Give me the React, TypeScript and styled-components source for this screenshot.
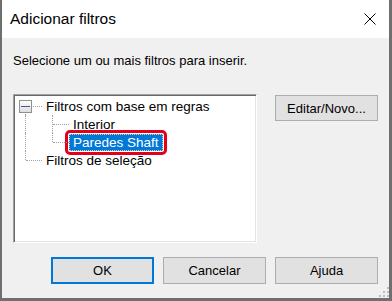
import styled, { createGlobalStyle, css } from "styled-components";

const GlobalStyle = createGlobalStyle`
  html, body {
    margin: 0;
    padding: 0;
    background: #f0f0f0;
  }
  body {
    font-family: "Liberation Sans", Arial, sans-serif;
    color: #000;
  }
`;

const Window = styled.div`
  position: relative;
  width: 392px;
  height: 301px;
  box-sizing: border-box;
  border: 0 solid #6f6f6f;
  border-width: 0 3px 3px 2px;
  display: flex;
  flex-direction: column;
  background: #f0f0f0;
  overflow: hidden;
`;

const TitleBar = styled.div`
  flex: none;
  height: 38px;
  display: flex;
  align-items: center;
  padding-left: 8px;
  background: #fff;
`;

const Title = styled.span`
  flex: 1;
  font-size: 15.5px;
`;

const CloseButton = styled.div`
  width: 38px;
  height: 38px;
  display: flex;
  align-items: center;
  justify-content: center;
`;

const Body = styled.div`
  flex: 1;
  display: flex;
  flex-direction: column;
  padding: 15px 11px 14px;
`;

const Prompt = styled.p`
  margin: 0;
  font-size: 13px;
  line-height: 16px;
`;

const Middle = styled.div`
  display: flex;
  align-items: flex-start;
  gap: 18px;
  margin-top: 25px;
`;

const TreeBox = styled.div`
  width: 244px;
  height: 149px;
  box-sizing: border-box;
  background: #fff;
  border: 1px solid;
  border-color: #a0a0a0 #fff #fff #a0a0a0;
  box-shadow: inset 1px 1px 0 #696969, inset -1px -1px 0 #e3e3e3;
  padding: 2px 0 0 1px;
`;

const Row = styled.div`
  display: flex;
  align-items: center;
  height: 18px;
`;

type Line = "none" | "full" | "top" | "bottom";

const Gutter = styled.span<{ $v: Line; $h?: boolean }>`
  position: relative;
  flex: none;
  width: 27px;
  height: 18px;
  display: flex;
  align-items: flex-start;

  &::before {
    content: "";
    display: ${(p) => (p.$v === "none" ? "none" : "block")};
    position: absolute;
    left: 10px;
    top: ${(p) => (p.$v === "bottom" ? "9px" : "0")};
    height: ${(p) => (p.$v === "full" ? "18px" : "9px")};
    border-left: 1px dotted #a0a0a0;
  }

  &::after {
    content: "";
    display: ${(p) => (p.$h ? "block" : "none")};
    position: absolute;
    left: 11px;
    top: 9px;
    width: 16px;
    border-top: 1px dotted #a0a0a0;
  }
`;

const Expander = styled.span`
  position: relative;
  z-index: 1;
  box-sizing: border-box;
  width: 13px;
  height: 13px;
  margin: 3px 0 0 4px;
  border: 1px solid #919191;
  background: linear-gradient(#fdfdfd, #dedede);
  display: flex;
  align-items: center;
  justify-content: center;

  &::after {
    content: "";
    width: 9px;
    height: 1px;
    background: #3c5a96;
  }
`;

const Label = styled.span<{ $selected?: boolean }>`
  padding: 0 3px;
  border: 1px dotted transparent;
  font-size: 13.5px;
  line-height: 15px;
  white-space: nowrap;

  ${(p) =>
    p.$selected &&
    css`
      background: #0078d7;
      color: #fff;
      border-color: #f0c890;
      border-radius: 1px;
      outline: 3px solid #e2001a;
      outline-offset: 1px;
    `}
`;

const Button = styled.div<{ $default?: boolean; $h?: number }>`
  width: 103px;
  height: ${(p) => p.$h ?? 27}px;
  box-sizing: border-box;
  display: flex;
  align-items: center;
  justify-content: center;
  background: #e1e1e1;
  border: ${(p) => (p.$default ? "2px solid #0078d7" : "1px solid #adadad")};
  font-size: 13px;
`;

const SideButton = styled(Button)`
  margin-top: 1px;
`;

const Footer = styled.div`
  display: flex;
  justify-content: flex-end;
  gap: 9px;
  margin-top: 14px;
`;

const Grip = styled.svg`
  position: absolute;
  right: 0;
  bottom: 0;
`;

const tree: { label: string; gutters: { v: Line; h?: boolean; exp?: boolean }[]; selected?: boolean }[] = [
  { label: "Filtros com base em regras", gutters: [{ v: "bottom", h: true, exp: true }] },
  { label: "Interior", gutters: [{ v: "full" }, { v: "full", h: true }] },
  { label: "Paredes Shaft", gutters: [{ v: "full" }, { v: "top", h: true }], selected: true },
  { label: "Filtros de seleção", gutters: [{ v: "top", h: true }] },
];

export default function App() {
  return (
    <>
      <GlobalStyle />
      <Window>
        <TitleBar>
          <Title>Adicionar filtros</Title>
          <CloseButton>
            <svg width="12" height="12" viewBox="0 0 12 12">
              <path d="M0.5 0.5L11.5 11.5M11.5 0.5L0.5 11.5" stroke="#000" strokeWidth="1" />
            </svg>
          </CloseButton>
        </TitleBar>
        <Body>
          <Prompt>Selecione um ou mais filtros para inserir.</Prompt>
          <Middle>
            <TreeBox>
              {tree.map((item) => (
                <Row key={item.label}>
                  {item.gutters.map((g, i) => (
                    <Gutter key={i} $v={g.v} $h={g.h}>
                      {g.exp && <Expander />}
                    </Gutter>
                  ))}
                  <Label $selected={item.selected}>{item.label}</Label>
                </Row>
              ))}
            </TreeBox>
            <SideButton $h={26}>Editar/Novo...</SideButton>
          </Middle>
          <Footer>
            <Button $default>OK</Button>
            <Button>Cancelar</Button>
            <Button>Ajuda</Button>
          </Footer>
        </Body>
        <Grip width="11" height="11" viewBox="0 0 11 11">
          {[
            [9, 0],
            [5, 4],
            [9, 4],
            [1, 8],
            [5, 8],
            [9, 8],
          ].map(([x, y]) => (
            <rect key={`${x}-${y}`} x={x} y={y} width="2" height="2" fill="#bcbcbc" />
          ))}
        </Grip>
      </Window>
    </>
  );
}
